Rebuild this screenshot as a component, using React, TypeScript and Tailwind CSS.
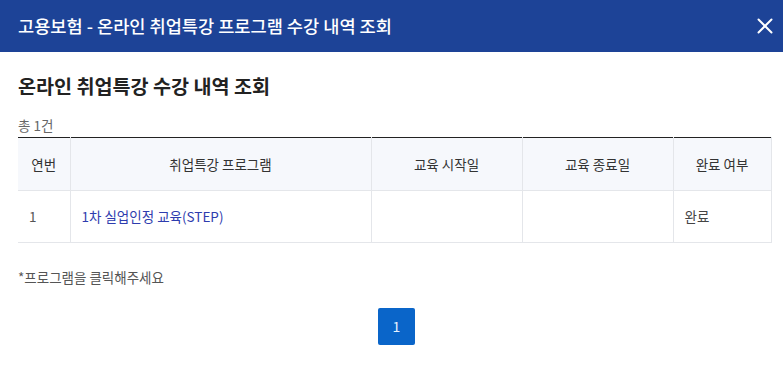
import { X } from "lucide-react";

const font = { fontFamily: '"Noto Sans CJK KR", "Noto Sans", sans-serif' };

const columns = [
  { label: "연번", width: "w-[52px]" },
  { label: "취업특강 프로그램", width: "w-[301px]" },
  { label: "교육 시작일", width: "w-[151px]" },
  { label: "교육 종료일", width: "w-[151px]" },
  { label: "완료 여부", width: "w-[98px]" },
];

const rows = [{ no: "1", title: "1차 실업인정 교육(STEP)", start: "", end: "", done: "완료" }];

export default function App() {
  return (
    <div className="w-[783px] h-[387px] bg-white overflow-hidden" style={font}>
      {/* Modal header */}
      <header className="flex items-center justify-between h-[52px] bg-[#1d4397] pl-[18px] pr-[4px]">
        <h1 className="text-[17.6px] font-medium text-white">
          고용보험 - 온라인 취업특강 프로그램 수강 내역 조회
        </h1>
        <button type="button" aria-label="닫기" className="flex h-[28px] w-[28px] items-center justify-center text-white">
          <X size={26} strokeWidth={1.8} />
        </button>
      </header>

      <div className="pl-[18px] pr-[12px]">
        <h2 className="mt-[19px] text-[19.6px] leading-[30px] font-bold text-[#222]">온라인 취업특강 수강 내역 조회</h2>

        <p className="mt-[15px] text-[13.5px] leading-[18px] text-[#666]">총 1건</p>

        <table className="mt-[3px] w-[753px] table-fixed border-collapse border-t border-t-[#222]">
          <thead>
            <tr className="bg-[#f6f8fc]">
              {columns.map((c) => (
                <th
                  key={c.label}
                  className={[
                    c.width,
                    "h-[53px] border-r border-b border-[#e4e6ea] text-[13.5px] font-normal text-[#333] text-center",
                  ].join(" ")}
                >
                  {c.label}
                </th>
              ))}
            </tr>
          </thead>
          <tbody>
            {rows.map((r) => (
              <tr key={r.no}>
                <td className="h-[52px] border-r border-b border-[#e4e6ea] px-[11px] text-[13.5px] text-[#555]">{r.no}</td>
                <td className="h-[52px] border-r border-b border-[#e4e6ea] px-[11px] text-[13.5px] text-[#2e3cae] cursor-pointer">
                  {r.title}
                </td>
                <td className="h-[52px] border-r border-b border-[#e4e6ea] px-[11px] text-[13.5px]">{r.start}</td>
                <td className="h-[52px] border-r border-b border-[#e4e6ea] px-[11px] text-[13.5px]">{r.end}</td>
                <td className="h-[52px] border-r border-b border-[#e4e6ea] px-[11px] text-[13.5px] text-[#444]">{r.done}</td>
              </tr>
            ))}
          </tbody>
        </table>

        <p className="mt-[25px] text-[13.5px] leading-[18px] text-[#555]">*프로그램을 클릭해주세요</p>

        {/* Pagination */}
        <div className="mt-[22px] flex justify-center pl-[4px]">
          <button
            type="button"
            className="flex h-[37px] w-[37px] items-center justify-center rounded-[2px] bg-[#0a65c9] text-[14px] text-[#e6f2ff]"
          >
            1
          </button>
        </div>
      </div>
    </div>
  );
}
